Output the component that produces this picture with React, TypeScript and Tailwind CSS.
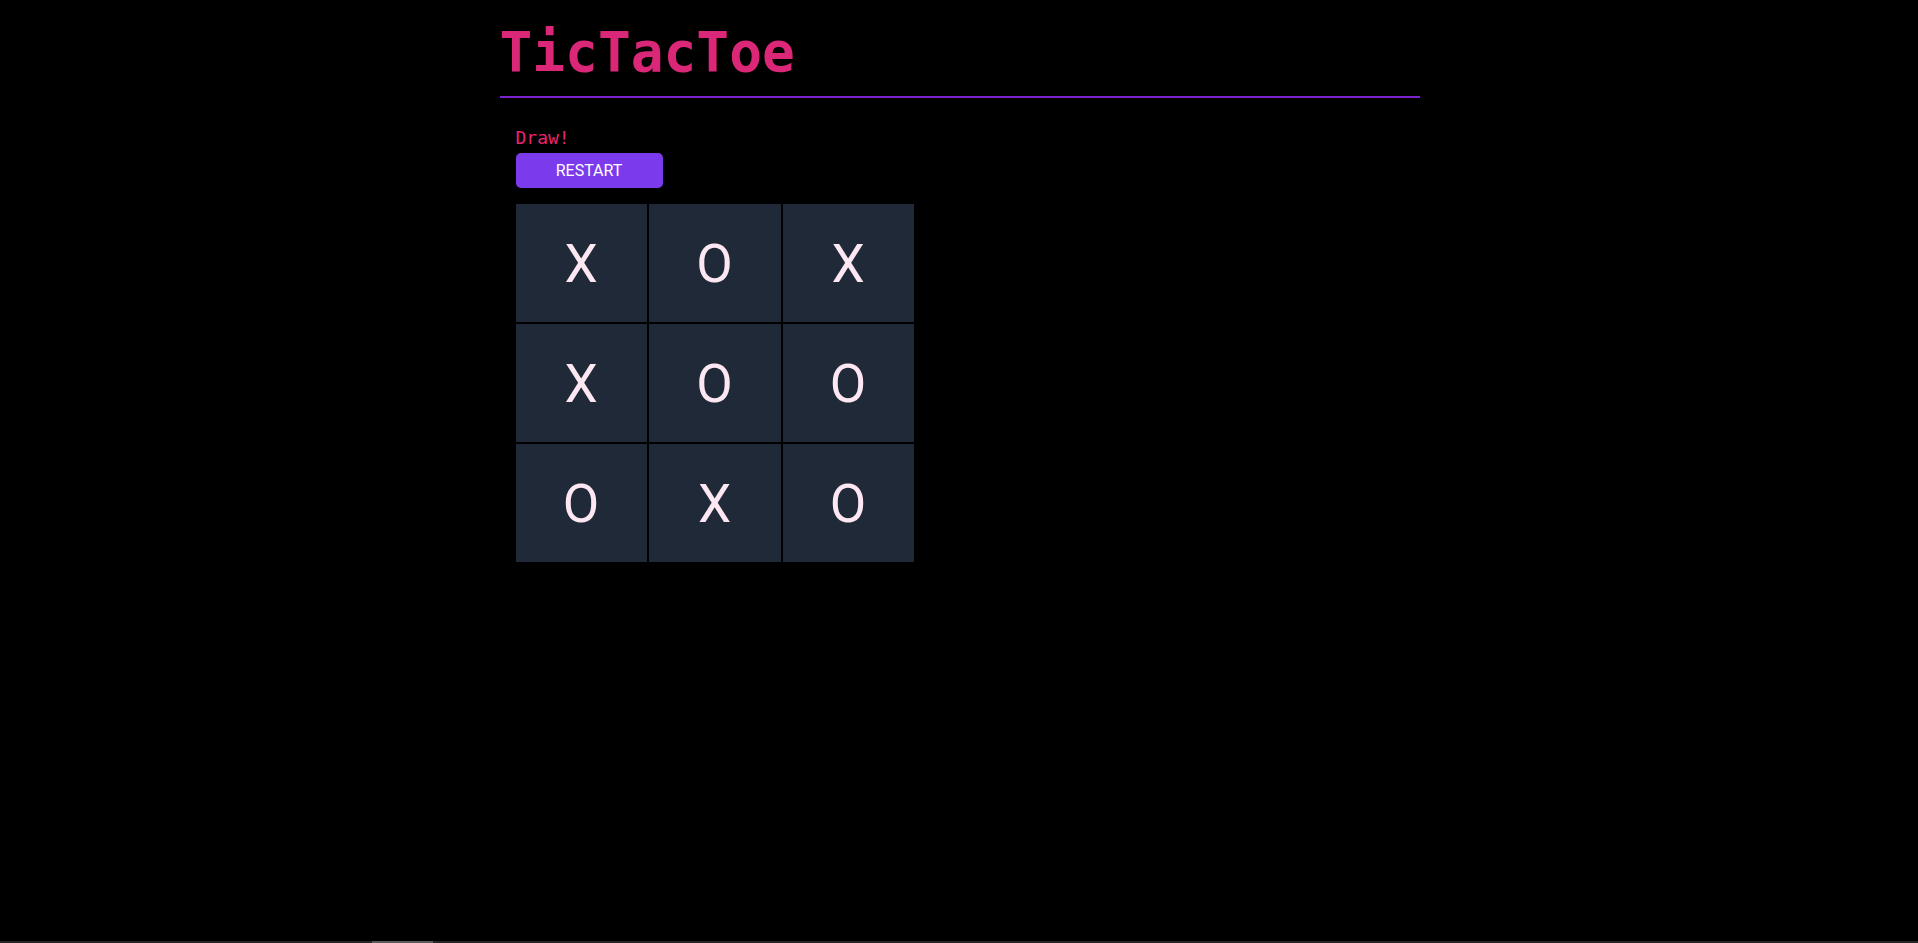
import React from "react";

const board = ["X", "O", "X", "X", "O", "O", "O", "X", "O"];

export default function App() {
  return (
    <div className="min-h-screen bg-black">
      <div className="mx-auto w-[921px] pl-[1px]">
        <h1
          className="pt-[20px] pb-3 border-b-2 border-[#7e22ce] text-[54.5px] leading-[64px] font-bold text-[#db2777]"
          style={{ fontFamily: '"DejaVu Sans Mono", monospace' }}
        >
          TicTacToe
        </h1>
        <div className="px-4 pt-[26px]">
          <p
            className="text-[18px] leading-[27px] text-[#e8236f]"
            style={{ fontFamily: '"DejaVu Sans Mono", monospace' }}
          >
            Draw!
          </p>
          <button
            className="mt-[2px] w-[147px] h-[35px] rounded-[5px] bg-[#7c3aed] text-white text-[16px] flex items-center justify-center"
            style={{ fontFamily: 'Roboto, sans-serif' }}
          >
            RESTART
          </button>
          <div className="mt-4 grid grid-cols-[131px_132px_131px] grid-rows-[118px_118px_118px] gap-[2px] w-fit">
            {board.map((v, i) => (
              <button
                key={i}
                className="bg-[#1f2937] text-[#fce7f3] text-[53px] pt-[4px] flex items-center justify-center"
                style={{ fontFamily: 'Roboto, sans-serif' }}
              >
                {v}
              </button>
            ))}
          </div>
        </div>
      </div>
      <div className="fixed left-0 right-0 bottom-0 h-[2px] bg-[#262626]">
        <div className="absolute left-[372px] w-[61px] h-[2px] bg-[#5c5c5c]" />
      </div>
    </div>
  );
}
